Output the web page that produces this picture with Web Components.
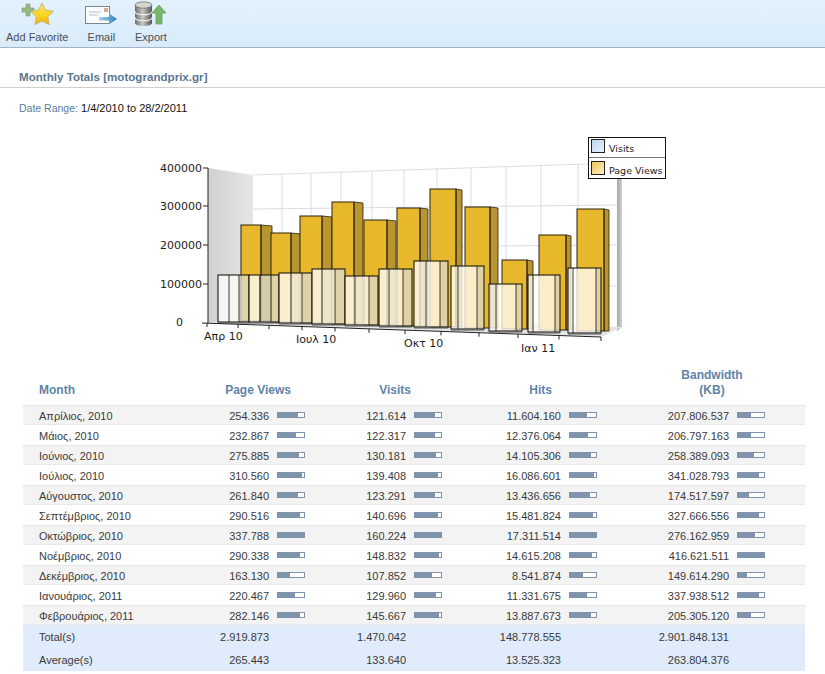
<!DOCTYPE html>
<html>
<head>
<meta charset="utf-8">
<title>Monthly Totals</title>
<style>
  html, body { margin: 0; background: #fff; font-family: "Liberation Sans", Arial, sans-serif; }
</style>
</head>
<body>
<report-toolbar>
  <toolbar-item label="Add Favorite">
    <svg width="33" height="25" viewBox="0 0 33 25">
      <defs><linearGradient id="s" x1="0" y1="0" x2="0" y2="1"><stop offset="0" stop-color="#f7e36a"/><stop offset=".6" stop-color="#fbd21d"/><stop offset="1" stop-color="#f0a818"/></linearGradient></defs>
      <path d="M5 3h4v4h4v4H9v4H5v-4H1V7h4z" fill="#8fbb7c" stroke="#89a482" stroke-width=".7"/>
      <path d="M21 2l3.600 7.200 7.900 1.100-5.700 5.500 1.400 7.900-7.200-3.800-7.200 3.800 1.400-7.900-5.700-5.500 7.900-1.100z" fill="url(#s)" stroke="#c4b06c" stroke-width=".8"/>
    </svg>
  </toolbar-item>
  <toolbar-item label="Email">
    <svg width="33" height="25" viewBox="0 0 33 25">
      <defs><linearGradient id="a" x1="0" y1="0" x2="1" y2="0"><stop offset="0" stop-color="#a9d3ec"/><stop offset="1" stop-color="#2a7fbb"/></linearGradient></defs>
      <rect x=".5" y="5.500" width="24" height="17" fill="#fbfcfd" stroke="#7d8791"/>
      <path d="M4 11h12M4 14h9" stroke="#b4c4d2" fill="none"/>
      <rect x="19" y="7" width="4" height="4" fill="#d9a9a0"/>
      <path d="M14 16h10v-3.500l8 5.500-8 5.500V19.500H14z" fill="url(#a)"/>
    </svg>
  </toolbar-item>
  <toolbar-item label="Export">
    <svg width="33" height="25" viewBox="0 0 33 25">
      <defs><linearGradient id="c" x1="0" y1="0" x2="1" y2="0"><stop offset="0" stop-color="#6e6e6c"/><stop offset=".45" stop-color="#c9c9c4"/><stop offset="1" stop-color="#55554f"/></linearGradient></defs>
      <path d="M1 4v18c0 2 4 3 8.500 3s8.500-1 8.500-3V4z" fill="url(#c)"/>
      <ellipse cx="9.500" cy="4" rx="8.500" ry="3.200" fill="#d4d4cf" stroke="#66665f" stroke-width=".7"/>
      <path d="M1 10.500c0 2 4 3.200 8.500 3.200s8.500-1.200 8.500-3.200M1 16.500c0 2 4 3.200 8.500 3.200s8.500-1.200 8.500-3.200" fill="none" stroke="#eee" stroke-width="1.200"/>
      <path d="M25 4l7 8h-4v11h-6V12h-4z" fill="#77b765" stroke="#5f9a57" stroke-width=".7"/>
    </svg>
  </toolbar-item>
</report-toolbar>
<report-heading title-text="Monthly Totals [motograndprix.gr]" range="1/4/2010 to 28/2/2011"></report-heading>
<totals-chart></totals-chart>
<stats-table></stats-table>

<script>
class ReportToolbar extends HTMLElement {
  constructor() {
    super();
    this.attachShadow({ mode: "open" }).innerHTML = `
      <style>
        :host {
          display: flex;
          box-sizing: border-box;
          height: 48px;
          padding-left: 6px;
          gap: 16.500px;
          background: linear-gradient(#e3f1fd, #d9ebfa);
          border-bottom: 1px solid #a3b4c2;
        }
      </style>
      <slot></slot>`;
  }
}

class ToolbarItem extends HTMLElement {
  connectedCallback() {
    this.attachShadow({ mode: "open" }).innerHTML = `
      <style>
        :host {
          display: flex;
          flex-direction: column;
          align-items: center;
          padding-top: 1px;
          color: #4a4f55;
          font-size: 11px;
          line-height: 14px;
        }
        .icon { height: 25px; margin-bottom: 4px; }
        ::slotted(svg) { display: block; }
      </style>
      <div class="icon"><slot></slot></div>
      <div>${this.getAttribute("label")}</div>`;
  }
}

class ReportHeading extends HTMLElement {
  connectedCallback() {
    this.attachShadow({ mode: "open" }).innerHTML = `
      <style>
        :host { display: block; font-size: 11px; line-height: 14px; }
        h1 {
          margin: 0;
          padding: 22px 19px 3px;
          font-size: 11.600px;
          line-height: 14px;
          color: #5a7690;
          border-bottom: 1px solid #cfcfcf;
        }
        p { margin: 0; padding: 13px 19px 15px; color: #111; }
        span { color: #5d7d9c; font-size: 10.500px; }
      </style>
      <h1>${this.getAttribute("title-text")}</h1>
      <p><span>Date Range:</span> ${this.getAttribute("range")}</p>`;
  }
}

class TotalsChart extends HTMLElement {
  connectedCallback() {
    // left, front right, side right, top, bottom of each page views bar
    const gold = [
      [241, 261, 272, 225, 321], [271, 291, 301, 233, 322], [300, 322, 332, 216, 323],
      [332, 354, 363, 202, 324], [364, 387, 396, 220, 325], [397, 420, 428, 208, 326],
      [430, 456, 462, 189, 327], [465, 490, 498, 207, 328], [502, 527, 533, 260, 329],
      [539, 566, 571, 235, 330], [577, 604, 609, 209, 331],
    ];
    // left, line, line, right, top, bottom of each visits bar
    const visits = [
      [218, 229, 239, 249, 275, 322], [249, 260, 260, 279, 275, 322], [279, 291, 302, 312, 273, 323],
      [312, 322, 335, 345, 269, 324], [345, 355, 369, 378, 276, 325], [379, 389, 403, 412, 269, 326],
      [414, 426, 440, 448, 261, 327], [451, 458, 477, 484, 266, 329], [489, 496, 516, 522, 284, 331],
      [528, 533, 555, 560, 275, 332], [568, 573, 596, 601, 268, 333],
    ];
    const gridX = [282, 311, 341, 372, 404, 437, 471, 506, 541, 578];
    const gridY = [[209, 205], [248, 245], [287, 286]];
    const ticks = [207, 238, 269, 302, 335, 369, 405, 441, 479, 518, 559, 601];
    const yLabels = [["400000", 202, 172], ["300000", 202, 210], ["200000", 202, 249], ["100000", 202, 288], ["0", 183, 326]];
    const xLabels = [["Απρ 10", 204, 340], ["Ιουλ 10", 296, 343], ["Οκτ 10", 404, 347], ["Ιαν 11", 521, 352]];

    const tickY = (x) => 323 + ((x - 207) / 394) * 14;

    const grid = gridX.map((x) => `<line x1="${x}" y1="${175 - ((x - 253) / 364) * 12}" x2="${x}" y2="322" stroke="#d9dce2"/>`).join("")
      + gridY.map(([a, b]) => `<line x1="253" y1="${a}" x2="617" y2="${b}" stroke="#d9dce2"/>`).join("");

    const goldBars = gold.map(([l, m, r, t, b]) => `
      <rect x="${l}" y="${t}" width="${m - l}" height="${b - t}" fill="#e8b82c"/>
      <path d="M${m} ${t}L${r} ${t + 1}V${b}H${m}Z" fill="#b8952f" stroke="#2b210c" stroke-width=".8"/>
      <rect x="${l}" y="${t}" width="${m - l}" height="${b - t}" fill="none" stroke="#2b210c" stroke-width="1"/>`).join("");

    const visitBars = visits.map(([l, a, c, r, t, b]) => `
      <rect x="${l}" y="${t}" width="${a - l}" height="${b - t}" fill="rgba(255,255,255,.76)"/>
      <rect x="${a}" y="${t}" width="${c - a}" height="${b - t}" fill="rgba(255,253,245,.78)"/>
      <rect x="${c}" y="${t}" width="${r - c}" height="${b - t}" fill="rgba(220,218,206,.76)"/>
      <path d="M${a} ${t}V${b}M${c} ${t}V${b}" stroke="#2b2718" stroke-width=".9"/>
      <rect x="${l}" y="${t}" width="${r - l}" height="${b - t}" fill="none" stroke="#1d1a10" stroke-width="1.100"/>
      <line x1="${l}" y1="${b + 1}" x2="${r}" y2="${b + 1}" stroke="#555"/>`).join("");

    this.attachShadow({ mode: "open" }).innerHTML = `
      <style>
        :host { display: block; height: 230px; }
        svg { display: block; }
        text { font-family: "DejaVu Sans", Verdana, sans-serif; fill: #1c1c1c; }
      </style>
      <svg width="825" height="230" viewBox="0 130 825 230">
        <defs>
          <linearGradient id="wall" x1="0" y1="0" x2="1" y2="0"><stop offset="0" stop-color="#cfd0d0"/><stop offset="1" stop-color="#e6e6e6"/></linearGradient>
          <linearGradient id="side" x1="0" y1="0" x2="1" y2="0"><stop offset="0" stop-color="#a3a5aa"/><stop offset="1" stop-color="#d0d1d4"/></linearGradient>
          <linearGradient id="lg1" x1="0" y1="0" x2="1" y2="1"><stop offset="0" stop-color="#b7d3ef"/><stop offset="1" stop-color="#eaf2fa"/></linearGradient>
          <linearGradient id="lg2" x1="0" y1="0" x2="1" y2="1"><stop offset="0" stop-color="#ecc452"/><stop offset="1" stop-color="#fbf0cd"/></linearGradient>
        </defs>
        <path d="M208 168L253 175V316L208 323Z" fill="url(#wall)"/>
        <path d="M253 175L617 163V322L253 316Z" fill="#fff"/>
        <path d="M253 175L617 163" stroke="#dcdfe4" fill="none"/>
        ${grid}
        <path d="M617 163H622V327L617 331Z" fill="url(#side)"/>
        <path d="M208 323L253 316L622 327L601 337Z" fill="#e4e4e4"/>
        ${goldBars}
        ${visitBars}
        <line x1="271" y1="275" x2="271" y2="322" stroke="#2b2718" stroke-width=".9"/>
        <path d="M208 168V323M203 168H208M203 206H208M203 245H208M203 284H208M202 323L601 337" stroke="#222" fill="none"/>
        ${ticks.map((x) => `<line x1="${x}" y1="${tickY(x)}" x2="${x}" y2="${tickY(x) + 4}" stroke="#222"/>`).join("")}
        ${yLabels.map(([s, x, y]) => `<text x="${x}" y="${y}" text-anchor="end" font-size="11">${s}</text>`).join("")}
        ${xLabels.map(([s, x, y]) => `<text x="${x}" y="${y}" font-size="11">${s}</text>`).join("")}
        <rect x="588.500" y="137.500" width="77" height="41" fill="#fff" stroke="#111"/>
        <line x1="589" y1="157.500" x2="665" y2="157.500" stroke="#777"/>
        <rect x="591.500" y="139.500" width="13" height="13" fill="url(#lg1)" stroke="#222"/>
        <rect x="591.500" y="161.500" width="13" height="13" fill="url(#lg2)" stroke="#222"/>
        <text x="609" y="152" font-size="9.500">Visits</text>
        <text x="609" y="174" font-size="9.500">Page Views</text>
      </svg>`;
  }
}

class StatMeter extends HTMLElement {
  connectedCallback() {
    const pct = Math.round(Number(this.getAttribute("ratio")) * 100);
    this.attachShadow({ mode: "open" }).innerHTML = `
      <style>
        :host {
          display: block;
          box-sizing: border-box;
          width: 28px;
          height: 6px;
          background: #fff;
          border: 1px solid #7f93ad;
        }
        div { height: 100%; background: #7f93ad; }
      </style>
      <div style="width:${pct}%"></div>`;
  }
}

class StatsTable extends HTMLElement {
  constructor() {
    super();
    this.rows = [
      ["Απρίλιος, 2010", "254.336", "121.614", "11.604.160", "207.806.537"],
      ["Μάιος, 2010", "232.867", "122.317", "12.376.064", "206.797.163"],
      ["Ιούνιος, 2010", "275.885", "130.181", "14.105.306", "258.389.093"],
      ["Ιούλιος, 2010", "310.560", "139.408", "16.086.601", "341.028.793"],
      ["Αύγουστος, 2010", "261.840", "123.291", "13.436.656", "174.517.597"],
      ["Σεπτέμβριος, 2010", "290.516", "140.696", "15.481.824", "327.666.556"],
      ["Οκτώβριος, 2010", "337.788", "160.224", "17.311.514", "276.162.959"],
      ["Νοέμβριος, 2010", "290.338", "148.832", "14.615.208", "416.621.511"],
      ["Δεκέμβριος, 2010", "163.130", "107.852", "8.541.874", "149.614.290"],
      ["Ιανουάριος, 2011", "220.467", "129.960", "11.331.675", "337.938.512"],
      ["Φεβρουάριος, 2011", "282.146", "145.667", "13.887.673", "205.305.120"],
    ];
  }

  connectedCallback() {
    const toNumber = (s) => Number(s.replace(/\./g, ""));
    const maxes = [1, 2, 3, 4].map((c) => Math.max(...this.rows.map((r) => toNumber(r[c]))));

    const body = this.rows.map((row, i) => `
      <div class="row ${i % 2 === 0 ? "odd" : ""}">
        <div class="month">${row[0]}</div>
        ${[1, 2, 3, 4].map((c) => `
          <div class="cell"><span>${row[c]}</span><stat-meter ratio="${toNumber(row[c]) / maxes[c - 1]}"></stat-meter></div>`).join("")}
      </div>`).join("");

    this.attachShadow({ mode: "open" }).innerHTML = `
      <style>
        :host {
          display: block;
          width: 782px;
          margin-left: 23px;
          font-size: 11px;
          color: #3a3a3a;
          --cols: 182px 105px 137px 155px 168px 35px;
        }
        .head, .row, .sum { display: grid; grid-template-columns: var(--cols); align-items: center; }
        .head {
          height: 45px;
          padding-bottom: 7px;
          box-sizing: border-box;
          align-items: end;
          color: #5f84a8;
          font-weight: bold;
          font-size: 12px;
          line-height: 15px;
        }
        .head > div:nth-child(2) { text-align: right; padding-right: 19px; }
        .head > div:nth-child(3) { text-align: right; padding-right: 36px; }
        .head > div:nth-child(4) { text-align: right; padding-right: 50px; }
        .head > div:nth-child(5) { text-align: center; padding-left: 70px; width: 80px; }
        .row { height: 20px; box-sizing: border-box; }
        .odd { background: #f3f3f3; border-top: 1px solid #e7e7e7; border-bottom: 1px solid #e7e7e7; }
        .month { padding-left: 16px; }
        .row .month, .cell span, .sum > div { padding-top: 2px; }
        .cell { display: flex; justify-content: flex-end; align-items: center; gap: 8px; padding-right: 5px; }
        .sum { background: #e0ebfb; }
        .sum.total { height: 22px; }
        .sum.average { height: 24px; }
        .sum > div:not(.month) { text-align: right; padding-right: 41px; }
      </style>
      <div class="head">
        <div style="padding-left:16px">Month</div>
        <div>Page Views</div>
        <div>Visits</div>
        <div>Hits</div>
        <div>Bandwidth<br>(KB)</div>
      </div>
      ${body}
      <div class="sum total">
        <div class="month">Total(s)</div><div>2.919.873</div><div>1.470.042</div><div>148.778.555</div><div>2.901.848.131</div>
      </div>
      <div class="sum average">
        <div class="month">Average(s)</div><div>265.443</div><div>133.640</div><div>13.525.323</div><div>263.804.376</div>
      </div>`;
  }
}

customElements.define("report-toolbar", ReportToolbar);
customElements.define("toolbar-item", ToolbarItem);
customElements.define("report-heading", ReportHeading);
customElements.define("totals-chart", TotalsChart);
customElements.define("stat-meter", StatMeter);
customElements.define("stats-table", StatsTable);
</script>
</body>
</html>
